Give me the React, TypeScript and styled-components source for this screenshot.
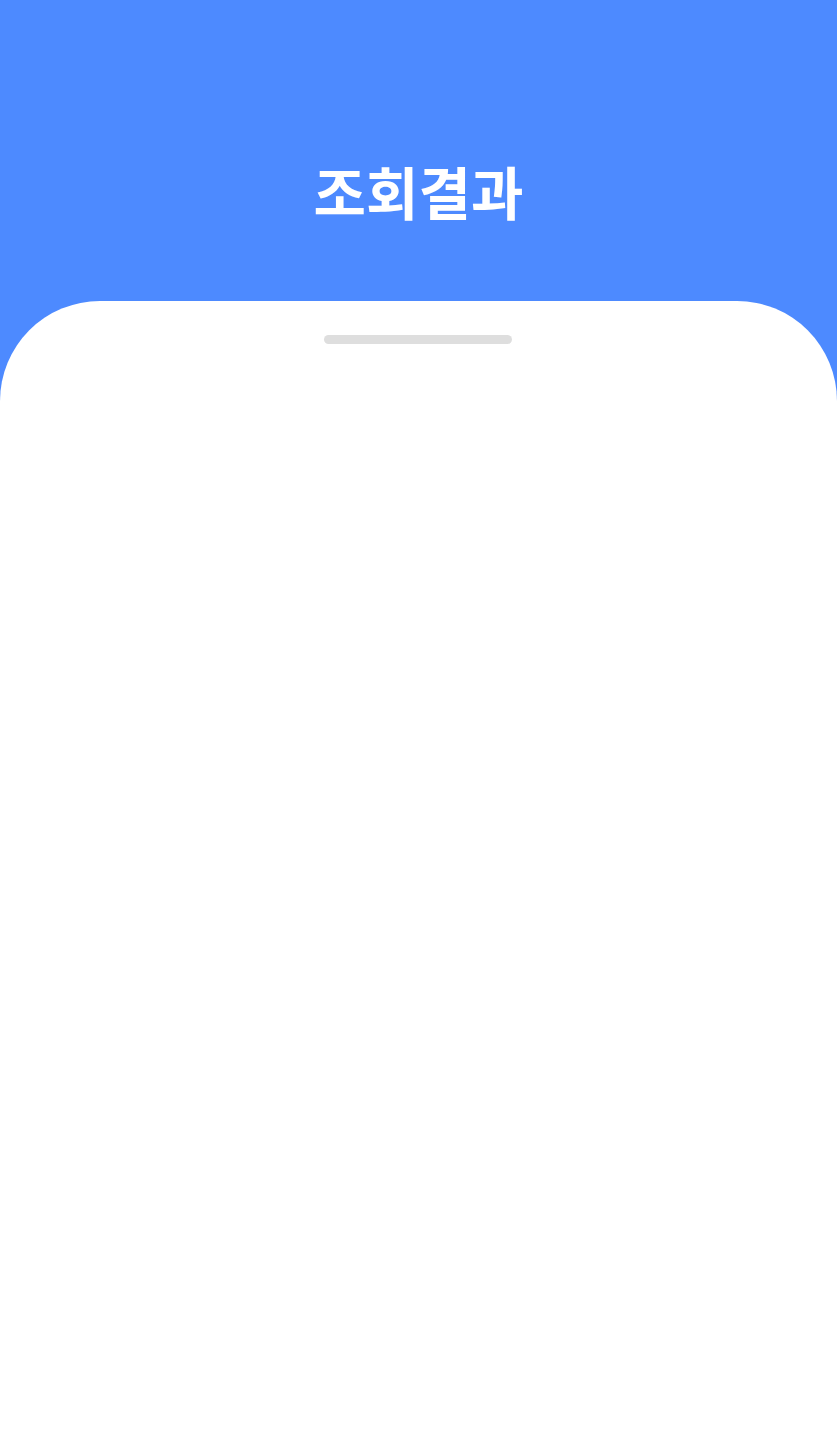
import React from "react";
import styled, { createGlobalStyle } from "styled-components";

const Global = createGlobalStyle`
  html, body { margin: 0; padding: 0; background: #4d8aff; }
  body { font-family: "Noto Sans CJK KR", "Noto Sans", sans-serif; }
`;

const Page = styled.div`
  display: flex;
  flex-direction: column;
  min-height: 1454px;
  background: #4d8aff;
`;

const Header = styled.header`
  height: 301px;
  display: flex;
  align-items: center;
  justify-content: center;
  padding-top: 80px;
  box-sizing: border-box;
`;

const Title = styled.h1`
  margin: 0;
  color: #ffffff;
  font-family: "Noto Sans CJK KR", sans-serif;
  font-weight: 700;
  font-size: 57px;
  line-height: 1;
  letter-spacing: 0;
`;

const Sheet = styled.main`
  flex: 1;
  background: #ffffff;
  border-radius: 100px 100px 0 0;
  display: flex;
  flex-direction: column;
  align-items: center;
  padding-top: 34px;
`;

const Handle = styled.div`
  width: 188px;
  height: 9px;
  border-radius: 5px;
  background: #dedede;
  margin-right: 1px;
`;

export default function App() {
  return (
    <>
      <Global />
      <Page>
        <Header>
          <Title>조회결과</Title>
        </Header>
        <Sheet>
          <Handle />
        </Sheet>
      </Page>
    </>
  );
}
